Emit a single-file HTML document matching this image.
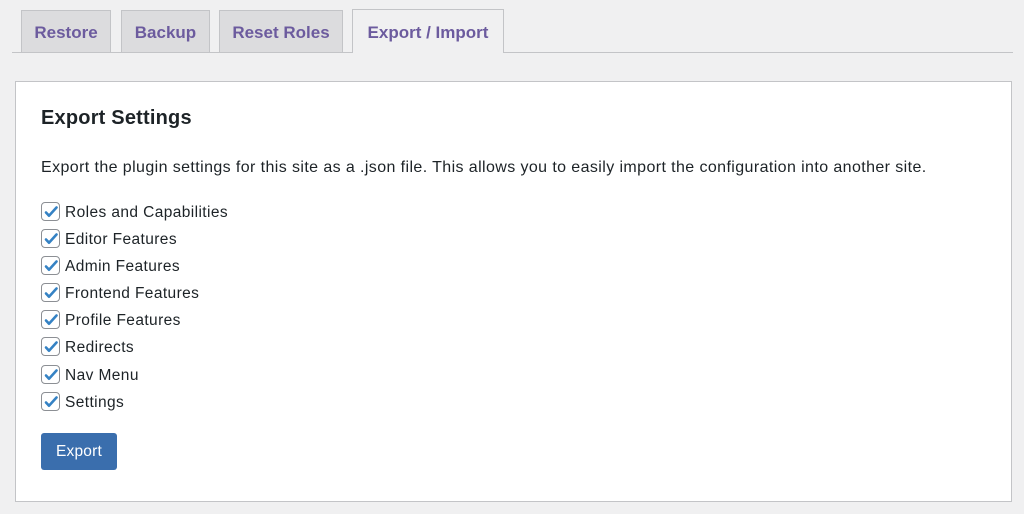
<!DOCTYPE html>
<html><head><style>
*{margin:0;padding:0;box-sizing:border-box}
body{width:1024px;height:514px;background:#f0f0f1;font-family:"Liberation Sans",sans-serif;color:#1d2327;position:relative;overflow:hidden}
.tab{position:absolute;top:10px;height:42px;background:#dcdcde;border:1px solid #c3c4c7;border-bottom:none;color:#6c5b9e;font-weight:bold;font-size:17px;line-height:43px;text-align:center}
.tab.active{background:#f0f0f1;top:9px;height:44px;line-height:45px;z-index:2}
.line{position:absolute;left:12px;top:52px;width:1001px;height:1px;background:#c3c4c7}
.panel{position:absolute;left:15px;top:81px;width:997px;height:421px;background:#fff;border:1px solid #c3c4c7}
h2{position:absolute;left:25px;top:25px;font-size:20px;font-weight:bold;letter-spacing:0.2px}
p{position:absolute;left:25px;top:77px;font-size:16px;letter-spacing:0.4px;white-space:nowrap}
.row{position:absolute;left:25px;height:20px;font-size:15.5px;line-height:20px;letter-spacing:0.4px}
.cb{position:absolute;left:0;top:0;width:19px;height:19px;border:1px solid #8c8f94;border-radius:4px;background:#fff}
.cb svg{position:absolute;left:1px;top:1px}
.row span{position:absolute;left:24px;top:1px;white-space:nowrap}
.btn{position:absolute;left:25px;top:351px;width:76px;height:37px;background:#3a6ead;border-radius:3px;color:#fff;font-size:15.5px;line-height:38px;text-align:center;letter-spacing:0.2px}
</style></head><body>
<div class="tab" style="left:21px;width:90px">Restore</div>
<div class="tab" style="left:121px;width:89px">Backup</div>
<div class="tab" style="left:219px;width:124px">Reset Roles</div>
<div class="tab active" style="left:352px;width:152px">Export / Import</div>
<div class="line"></div>
<div class="panel">
<h2>Export Settings</h2>
<p>Export the plugin settings for this site as a .json file. This allows you to easily import the configuration into another site.</p>
<div class="row" style="top:120px"><div class="cb"><svg width="16" height="16" viewBox="0 0 16 16"><path d="M3 8.5l3 3.2L13.5 3.5" stroke="#3582c4" stroke-width="2.6" fill="none" stroke-linecap="round" stroke-linejoin="round"/></svg></div><span>Roles and Capabilities</span></div>
<div class="row" style="top:147px"><div class="cb"><svg width="16" height="16" viewBox="0 0 16 16"><path d="M3 8.5l3 3.2L13.5 3.5" stroke="#3582c4" stroke-width="2.6" fill="none" stroke-linecap="round" stroke-linejoin="round"/></svg></div><span>Editor Features</span></div>
<div class="row" style="top:174px"><div class="cb"><svg width="16" height="16" viewBox="0 0 16 16"><path d="M3 8.5l3 3.2L13.5 3.5" stroke="#3582c4" stroke-width="2.6" fill="none" stroke-linecap="round" stroke-linejoin="round"/></svg></div><span>Admin Features</span></div>
<div class="row" style="top:201px"><div class="cb"><svg width="16" height="16" viewBox="0 0 16 16"><path d="M3 8.5l3 3.2L13.5 3.5" stroke="#3582c4" stroke-width="2.6" fill="none" stroke-linecap="round" stroke-linejoin="round"/></svg></div><span>Frontend Features</span></div>
<div class="row" style="top:228px"><div class="cb"><svg width="16" height="16" viewBox="0 0 16 16"><path d="M3 8.5l3 3.2L13.5 3.5" stroke="#3582c4" stroke-width="2.6" fill="none" stroke-linecap="round" stroke-linejoin="round"/></svg></div><span>Profile Features</span></div>
<div class="row" style="top:255px"><div class="cb"><svg width="16" height="16" viewBox="0 0 16 16"><path d="M3 8.5l3 3.2L13.5 3.5" stroke="#3582c4" stroke-width="2.6" fill="none" stroke-linecap="round" stroke-linejoin="round"/></svg></div><span>Redirects</span></div>
<div class="row" style="top:283px"><div class="cb"><svg width="16" height="16" viewBox="0 0 16 16"><path d="M3 8.5l3 3.2L13.5 3.5" stroke="#3582c4" stroke-width="2.6" fill="none" stroke-linecap="round" stroke-linejoin="round"/></svg></div><span>Nav Menu</span></div>
<div class="row" style="top:310px"><div class="cb"><svg width="16" height="16" viewBox="0 0 16 16"><path d="M3 8.5l3 3.2L13.5 3.5" stroke="#3582c4" stroke-width="2.6" fill="none" stroke-linecap="round" stroke-linejoin="round"/></svg></div><span>Settings</span></div>
<div class="btn">Export</div>
</div>
</body></html>
